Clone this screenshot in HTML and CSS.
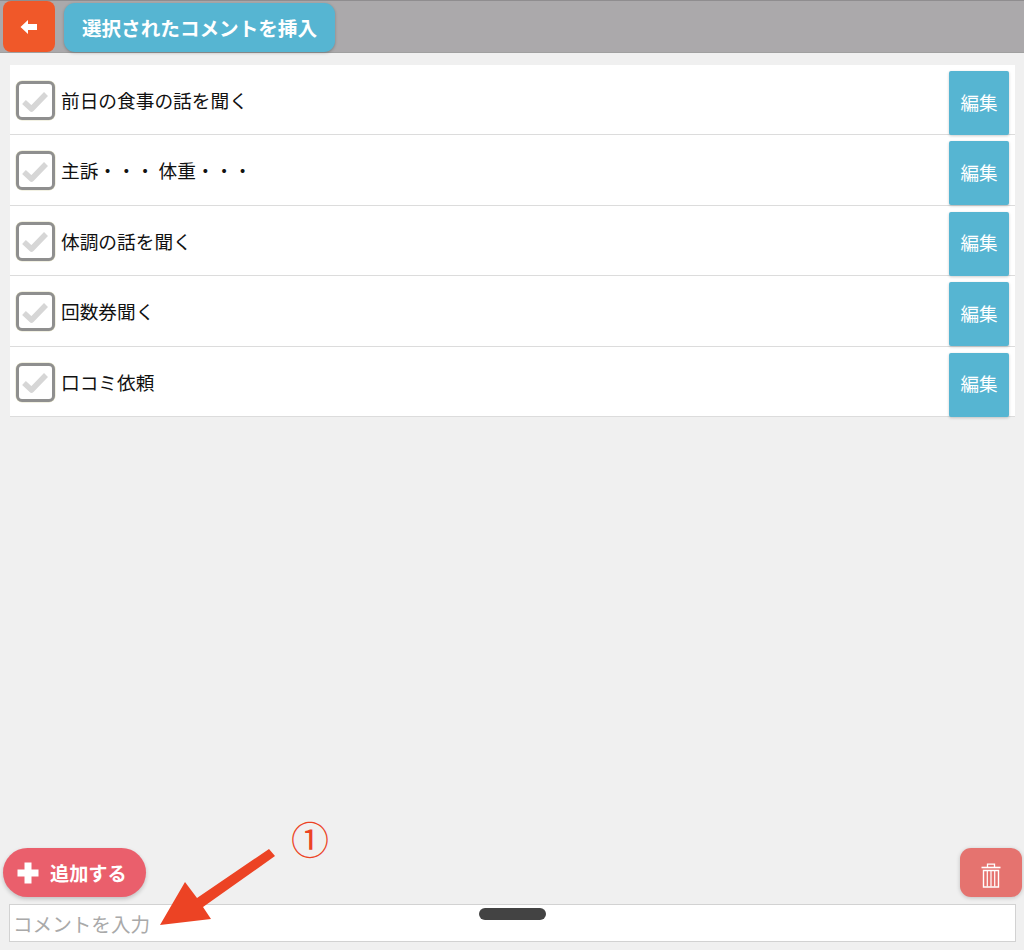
FILE: index.html
```html
<!DOCTYPE html>
<html lang="ja">
<head>
<meta charset="utf-8">
<title>コメント</title>
<link rel="stylesheet" href="styles.css">
</head>
<body>
<div class="app">
  <header class="topbar">
    <button class="back" aria-label="戻る">
      <svg width="18" height="16" viewBox="0 0 18 16"><path d="M0.5 8 L8 1 V5 H17 V11 H8 V15 Z" fill="#fff"/></svg>
    </button>
    <button class="insert">選択されたコメントを挿入</button>
  </header>
  <main class="list">
    <div class="row">
      <span class="check"><svg width="30" height="24" viewBox="0 0 30 24"><path d="M3 13 L10.5 20 L25 5" fill="none" stroke="#d6d6d6" stroke-width="5.5" stroke-linejoin="round"/></svg></span>
      <span class="label">前日の食事の話を聞く</span>
      <button class="edit">編集</button>
    </div>
    <div class="row">
      <span class="check"><svg width="30" height="24" viewBox="0 0 30 24"><path d="M3 13 L10.5 20 L25 5" fill="none" stroke="#d6d6d6" stroke-width="5.5" stroke-linejoin="round"/></svg></span>
      <span class="label">主訴・・・ 体重・・・</span>
      <button class="edit">編集</button>
    </div>
    <div class="row">
      <span class="check"><svg width="30" height="24" viewBox="0 0 30 24"><path d="M3 13 L10.5 20 L25 5" fill="none" stroke="#d6d6d6" stroke-width="5.5" stroke-linejoin="round"/></svg></span>
      <span class="label">体調の話を聞く</span>
      <button class="edit">編集</button>
    </div>
    <div class="row">
      <span class="check"><svg width="30" height="24" viewBox="0 0 30 24"><path d="M3 13 L10.5 20 L25 5" fill="none" stroke="#d6d6d6" stroke-width="5.5" stroke-linejoin="round"/></svg></span>
      <span class="label">回数券聞く</span>
      <button class="edit">編集</button>
    </div>
    <div class="row">
      <span class="check"><svg width="30" height="24" viewBox="0 0 30 24"><path d="M3 13 L10.5 20 L25 5" fill="none" stroke="#d6d6d6" stroke-width="5.5" stroke-linejoin="round"/></svg></span>
      <span class="label">口コミ依頼</span>
      <button class="edit">編集</button>
    </div>
  </main>
  <div class="actions">
    <button class="add">
      <svg width="22" height="22" viewBox="0 0 22 22"><path d="M7.5 0.5 H14.5 V7.5 H21.5 V14.5 H14.5 V21.5 H7.5 V14.5 H0.5 V7.5 H7.5 Z" fill="#fff"/></svg>
      <span>追加する</span>
    </button>
    <button class="trash" aria-label="削除">
      <svg width="20" height="25" viewBox="0 0 20 25" fill="none" stroke="#fff"><path d="M0.5 4.5 H19.5" stroke-width="1.6"/><path d="M6.5 4 V1.2 H13.5 V4" stroke-width="1.3"/><path d="M2.5 7.5 H17.5 V24 H2.5 Z" stroke-width="1.4"/><path d="M6.3 8 V23.5 M10 8 V23.5 M13.7 8 V23.5" stroke-width="1.2"/></svg>
    </button>
  </div>
  <div class="inputbar">
    <input class="comment" type="text" placeholder="コメントを入力">
  </div>
  <div class="homebar"></div>
  <svg class="annotation-arrow" width="120" height="80" viewBox="0 0 120 80"><path d="M0 76 L25 33 L37 49 L109 0 L115 7 L43 58 L51 70 Z" fill="#ec4324"/></svg>
  <div class="annotation-num">①</div>
</div>
</body>
</html>
```
FILE: styles.css
```css
* { box-sizing: border-box; }
html, body { margin: 0; padding: 0; }
body {
  width: 1024px;
  height: 950px;
  overflow: hidden;
  background: #f0f0f0;
  font-family: "Noto Sans CJK JP", "Noto Sans", sans-serif;
}
button { font-family: inherit; border: 0; padding: 0; }
.app {
  position: relative;
  height: 950px;
  display: flex;
  flex-direction: column;
}
.topbar {
  height: 53px;
  flex: none;
  background: #aba9ab;
  border-top: 1px solid #8f8d8f;
  border-bottom: 1px solid #a0a0a0;
  display: flex;
  align-items: flex-start;
  padding-left: 3px;
}
.back {
  width: 52px;
  height: 51px;
  background: #f05829;
  border-radius: 8px;
  display: flex;
  align-items: center;
  justify-content: center;
}
.insert {
  margin: 2px 0 0 9px;
  width: 271px;
  height: 49px;
  background: #56b5d2;
  border-radius: 11px;
  color: #fff;
  font-size: 19.6px;
  font-weight: 700;
  box-shadow: 0 1px 3px rgba(0,0,0,.25);
}
.list {
  flex: 1;
  margin: 12px 9px 0 10px;
}
.row {
  height: 70.4px;
  background: #fff;
  border-bottom: 1.5px solid #dcdcdc;
  display: flex;
  align-items: flex-start;
  padding: 6px 6px 0 6px;
}
.check {
  width: 39px;
  height: 39px;
  margin-top: 10px;
  border: 3px solid #8f8f8f;
  border-radius: 6px;
  background: #fff;
  box-shadow: 0 0 0 0.5px #e6e4c8;
  display: flex;
  align-items: center;
  justify-content: center;
  flex: none;
}
.label {
  margin: 13px 0 0 6px;
  flex: 1;
  font-size: 18.7px;
  line-height: 32px;
  color: #111;
}
.edit {
  width: 60px;
  height: 64px;
  padding-bottom: 4px;
  background: #56b5d2;
  border-radius: 2px;
  color: #fff;
  font-size: 18.6px;
  box-shadow: 0 1px 3px rgba(0,0,0,.2);
  position: relative;
}
.actions {
  flex: none;
  display: flex;
  justify-content: space-between;
  align-items: center;
  padding: 0 2px 0 3px;
  height: 49px;
}
.add {
  width: 143px;
  height: 49px;
  border-radius: 25px;
  background: #ea5f6c;
  color: #fff;
  font-size: 19.2px;
  font-weight: 700;
  display: flex;
  align-items: center;
  padding-left: 14px;
  gap: 11px;
  box-shadow: 0 2px 4px rgba(0,0,0,.2);
}
.trash {
  width: 62px;
  height: 49px;
  border-radius: 11px;
  background: #e5736f;
  display: flex;
  align-items: flex-end;
  justify-content: center;
  padding-bottom: 9px;
  box-shadow: 0 1px 4px rgba(0,0,0,.2);
}
.inputbar {
  flex: none;
  padding: 7px 8px 8px 9px;
}
.comment {
  display: block;
  width: 100%;
  height: 38px;
  border: 1.5px solid #d2d2d2;
  background: #fff;
  padding: 0 3px;
  font-family: inherit;
  font-size: 19.6px;
  outline: none;
}
.comment::placeholder { color: #a9a9a9; opacity: 1; }
.homebar {
  position: absolute;
  left: 479px;
  top: 908px;
  width: 67px;
  height: 12px;
  border-radius: 6px;
  background: #434343;
}
.annotation-arrow {
  position: absolute;
  left: 160px;
  top: 849px;
}
.annotation-num {
  position: absolute;
  left: 288px;
  top: 813px;
  width: 44px;
  text-align: center;
  font-size: 38px;
  line-height: 50px;
  color: #ec4324;
}
```
